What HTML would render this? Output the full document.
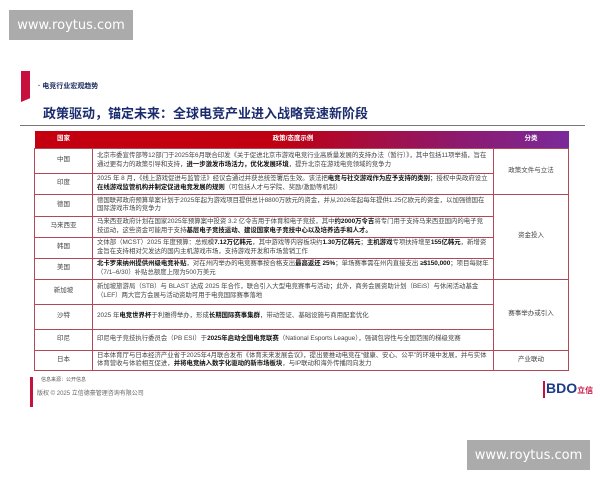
<!DOCTYPE html>
<html><head><meta charset="utf-8"><style>
*{margin:0;padding:0;box-sizing:border-box}
body{width:600px;height:480px;background:#fff;position:relative;overflow:hidden;font-family:"Liberation Sans","Noto Sans CJK SC",sans-serif;color:#333}
.wm{position:absolute;background:#ababab;color:#fff;font-size:13px;display:flex;align-items:center;justify-content:center;font-family:"DejaVu Sans",sans-serif}
.abs{position:absolute}
table{position:absolute;left:34px;top:131px;width:535px;border-collapse:collapse;font-size:6.4px;line-height:8.5px;color:#444}
td{border:1px solid #b04a58;padding:1px 4px;vertical-align:middle}
td.c{text-align:center;font-size:6.5px}
th{color:#fff;font-size:6.5px;height:17px;font-weight:bold}
b{color:#111}
</style></head><body>
<div class="wm" style="left:9px;top:10px;width:124px;height:30px">www.roytus.com</div>
<div class="wm" style="left:467px;top:440px;width:123px;height:30px">www.roytus.com</div>
<div class="abs" style="left:21px;top:71px;width:9px;height:31px;background:#c8103e;clip-path:polygon(0 0,100% 0,100% 88%,0 100%)"></div>
<div class="abs" style="left:38px;top:81px;font-size:7px;font-weight:bold;color:#1a2b5e">· 电竞行业宏观趋势</div>
<div class="abs" style="left:43px;top:103px;font-size:13px;font-weight:bold;color:#1a2b6e">政策驱动，锚定未来：全球电竞产业进入战略竞速新阶段</div>
<div class="abs" style="left:20px;top:125px;width:565px;height:1px;background:#777"></div>
<table>
<tr style="background:linear-gradient(90deg,#c40010 0%,#c00010 45%,#8c1a70 80%,#7a2a9a 100%)"><th style="width:58px">国家</th><th style="width:401px">政策/态度示例</th><th>分类</th></tr>
<tr style="height:25px"><td class="c">中国</td><td>北京市委宣传部等12部门于2025年6月联合印发《关于促进北京市游戏电竞行业高质量发展的支持办法（暂行）》，其中包括11项举措，旨在通过更有力的政策引导和支持，<b>进一步激发市场活力，优化发展环境</b>，提升北京在游戏电竞领域的竞争力</td><td class="c" rowspan="2">政策文件与立法</td></tr>
<tr style="height:21px"><td class="c">印度</td><td>2025 年 8 月，《线上游戏促进与监管法》经议会通过并获总统签署后生效。该法把<b>电竞与社交游戏作为应予支持的类别</b>；授权中央政府设立<b>在线游戏监管机构并制定促进电竞发展的规则</b>（可包括人才与学院、奖励/激励等机制）</td></tr>
<tr style="height:22px"><td class="c">德国</td><td>德国联邦政府预算草案计划于2025年起为游戏项目提供总计8800万欧元的资金，并从2026年起每年提供1.25亿欧元的资金，以加强德国在国际游戏市场的竞争力</td><td class="c" rowspan="4">资金投入</td></tr>
<tr style="height:21px"><td class="c">马来西亚</td><td>马来西亚政府计划在国家2025年预算案中投资 3.2 亿令吉用于体育和电子竞技，其中<b>约2000万令吉</b>将专门用于支持马来西亚国内的电子竞技运动，这些资金可能用于支持<b>基层电子竞技运动、建设国家电子竞技中心以及培养选手和人才。</b></td></tr>
<tr style="height:21px"><td class="c">韩国</td><td>文体部（MCST）2025 年度预算：总规模<b>7.12万亿韩元</b>，其中游戏等内容板块约<b>1.30万亿韩元</b>；<b>主机游戏</b>专项扶持增至<b>155亿韩元</b>，新增资金旨在支持相对欠发达的国内主机游戏市场，支持游戏开发和市场营销工作</td></tr>
<tr style="height:21px"><td class="c">美国</td><td><b>北卡罗来纳州提供州级电竞补贴</b>，对在州内举办的电竞赛事按合格支出<b>最高返还 25%</b>；单场赛事需在州内直接支出 <b>≥$150,000</b>；项目每财年（7/1–6/30）补贴总额度上限为500万美元</td></tr>
<tr style="height:25px"><td class="c">新加坡</td><td>新加坡旅游局（STB）与 BLAST 达成 2025 年合作，联合引入大型电竞赛事与活动；此外，商务会展资助计划（BEiS）与休闲活动基金（LEF）两大官方会展与活动资助可用于电竞国际赛事落地</td><td class="c" rowspan="3">赛事举办或引入</td></tr>
<tr style="height:25px"><td class="c">沙特</td><td>2025 年<b>电竞世界杯</b>于利雅得举办，形成<b>长期国际赛事集群</b>，带动签证、基础设施与商用配套优化</td></tr>
<tr style="height:21px"><td class="c">印尼</td><td>印尼电子竞技执行委员会（PB ESI）于<b>2025年启动全国电竞联赛</b>（National Esports League），强调包容性与全国范围的梯级竞赛</td></tr>
<tr style="height:20px"><td class="c">日本</td><td>日本体育厅与日本经济产业省于2025年4月联合发布《体育未来发展会议》，提出要推动电竞在“健康、安心、公平”的环境中发展，并与实体体育营收与体验相互促进，<b>并将电竞纳入数字化驱动的新市场板块</b>，与IP联动和海外传播同向发力</td><td class="c">产业联动</td></tr>
</table>
<div class="abs" style="left:30px;top:377px;width:3px;height:30px;background:#c8103e"></div>
<div class="abs" style="left:41px;top:376px;font-size:5px;color:#555">信息来源：公开信息</div>
<div class="abs" style="left:37px;top:388px;font-size:6px;color:#666">版权 © 2025 立信德豪管理咨询有限公司</div>
<div class="abs" style="left:543px;top:381px;font-size:14px;font-weight:bold;color:#1a3a8a;border-left:2px solid #c8103e;padding-left:1px;line-height:15px">BDO<span style="font-size:8px;color:#c8103e">立信</span></div>
</body></html>
